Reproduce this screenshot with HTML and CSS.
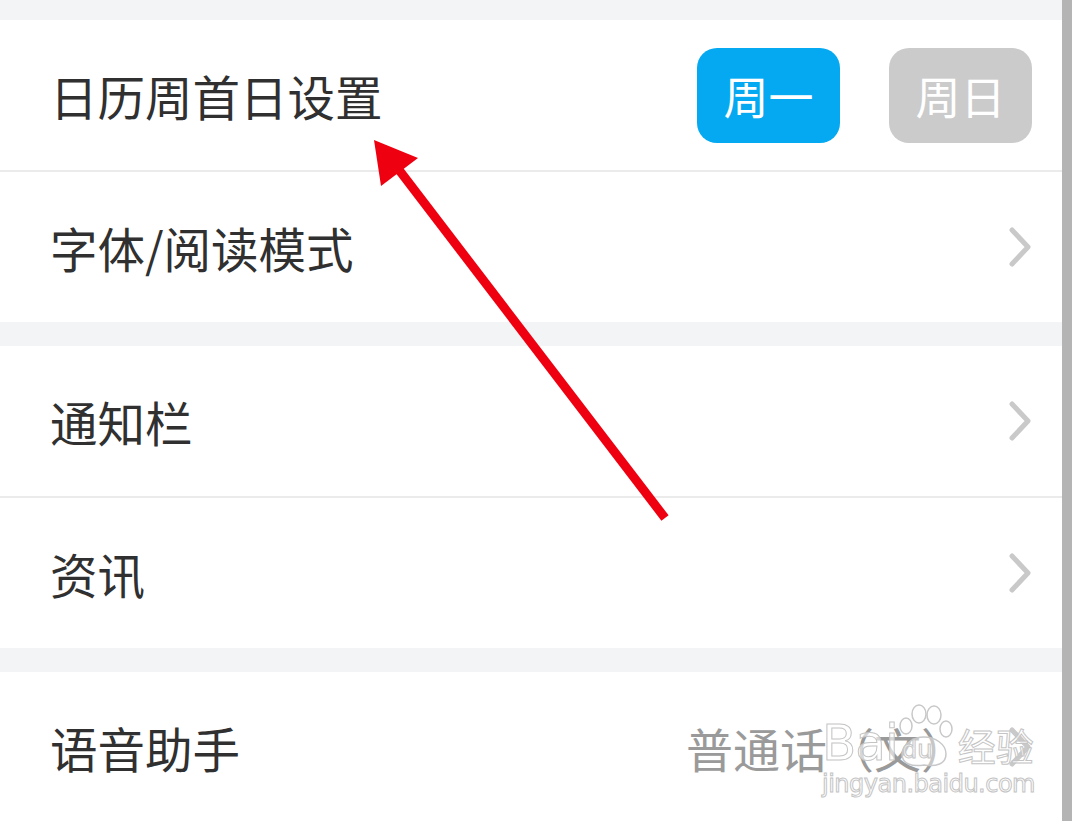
FILE: index.html
```html
<!DOCTYPE html>
<html lang="zh-CN">
	<head>
		<title>设置</title>
		<meta charset="utf-8">
		<meta name="viewport" content="width=device-width, initial-scale=1.0">
		<link rel="stylesheet" href="styles.css">
	</head>
	<body>
		<div class="page">
			<div class="gap top"></div>

			<div class="group">
				<div class="row">
					<span class="label">日历周首日设置</span>
					<div class="choices">
						<span class="choice on">周一</span>
						<span class="choice">周日</span>
					</div>
				</div>
				<div class="row">
					<span class="label">字体/阅读模式</span>
					<svg class="chev" viewBox="0 0 24 42"><path d="M4 4 L20 21 L4 38"/></svg>
				</div>
			</div>

			<div class="gap"></div>

			<div class="group">
				<div class="row">
					<span class="label">通知栏</span>
					<svg class="chev" viewBox="0 0 24 42"><path d="M4 4 L20 21 L4 38"/></svg>
				</div>
				<div class="row">
					<span class="label">资讯</span>
					<svg class="chev" viewBox="0 0 24 42"><path d="M4 4 L20 21 L4 38"/></svg>
				</div>
			</div>

			<div class="gap"></div>

			<div class="group">
				<div class="row">
					<span class="label">语音助手</span>
					<span class="value">普通话（文）</span>
					<svg class="chev" viewBox="0 0 24 42"><path d="M4 4 L20 21 L4 38"/></svg>
				</div>
			</div>

			<!-- annotation drawn over the screen -->
			<svg class="arrow" viewBox="0 0 1062 821">
				<line x1="665" y1="518" x2="396" y2="166"/>
				<polygon points="374,140 418,158 381,186"/>
			</svg>

			<div class="watermark">
				<div class="wm-top">
					<span class="wm-bai">Bai</span>
					<svg class="paw" viewBox="0 0 64 66">
						<ellipse cx="14" cy="22" rx="6" ry="8"/>
						<ellipse cx="27" cy="10" rx="7" ry="9"/>
						<ellipse cx="42" cy="11" rx="7" ry="9"/>
						<ellipse cx="54" cy="25" rx="6" ry="8"/>
						<path d="M10 50 C10 40 22 33 32 33 C43 33 54 40 54 50 C54 60 44 63 32 61 C20 63 10 60 10 50 Z"/>
					</svg>
					<span class="wm-du">du</span>
					<span class="wm-jy">经验</span>
				</div>
				<div class="wm-url">jingyan.baidu.com</div>
			</div>
		</div>
	</body>
</html>
```

FILE: styles.css
```css
body {
	margin: 0px;
	background-color: #ffffff;
	font-family: "Noto Sans CJK SC", "Noto Sans", sans-serif;
}

.page {
	position: relative;
	width: 1062px;
	height: 821px;
	overflow: hidden;
	border-right: 10px solid #b4b4b4;
	background-color: #f3f4f6;
}

.gap {
	height: 24px;
}

.gap.top {
	height: 20px;
}

.group {
	background-color: #ffffff;
}

.row {
	display: flex;
	align-items: center;
	height: 150px;
	padding: 0 30px 0 50px;
}

.row + .row {
	border-top: 2px solid #ebebeb;
}

.label {
	flex: 1;
	font-size: 47.5px;
	color: #303030;
}

.choices {
	display: flex;
	gap: 49px;
}

.choice {
	display: flex;
	align-items: center;
	justify-content: center;
	width: 143px;
	height: 95px;
	border-radius: 20px;
	background-color: #cbcbcb;
	color: #ffffff;
	font-size: 45px;
}

.choice.on {
	background-color: #04a9f2;
}

.value {
	margin-right: 40px;
	font-size: 47px;
	color: #9a9a9a;
}

.chev {
	width: 24px;
	height: 42px;
	fill: none;
	stroke: #c9c9c9;
	stroke-width: 5;
	stroke-linecap: round;
	stroke-linejoin: round;
}

.arrow {
	position: absolute;
	top: 0px;
	left: 0px;
	width: 1062px;
	height: 821px;
}

.arrow line {
	stroke: #ee0010;
	stroke-width: 9;
}

.arrow polygon {
	fill: #ee0010;
}

.watermark {
	position: absolute;
	left: 822px;
	top: 704px;
	color: rgba(255, 255, 255, 0.6);
	-webkit-text-stroke: 1px #c4c4c4;
	font-family: "DejaVu Sans", sans-serif;
}

.wm-top {
	position: relative;
	display: flex;
	align-items: flex-end;
	height: 66px;
}

.wm-bai {
	font-size: 50px;
	line-height: 54px;
	letter-spacing: -1px;
}

.paw {
	width: 64px;
	height: 66px;
	margin-left: -6px;
	fill: rgba(255, 255, 255, 0.45);
	stroke: #c8c8c8;
	stroke-width: 1.5;
}

.wm-du {
	position: absolute;
	left: 80px;
	bottom: 6px;
	font-size: 24px;
}

.wm-jy {
	margin-left: 2px;
	font-family: "Noto Sans CJK SC", sans-serif;
	font-size: 38px;
	line-height: 50px;
}

.wm-url {
	font-size: 24px;
	line-height: 28px;
	letter-spacing: -0.5px;
}
```
